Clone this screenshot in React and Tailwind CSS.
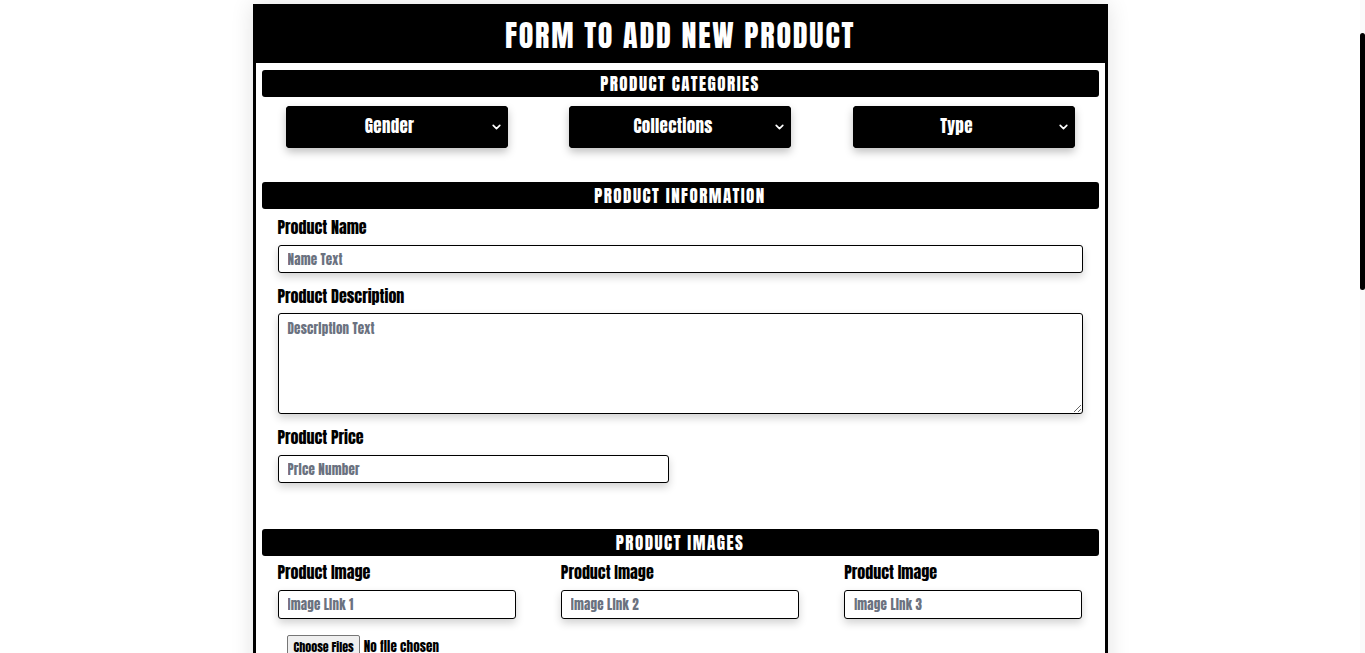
import React from "react";

const font = "font-['Anton','Roboto_Condensed','Liberation_Sans_Narrow','Arial_Narrow',sans-serif]";

function Bar({ children }) {
  return (
    <div className="h-[27px] pt-[2px] bg-black rounded-[3px] flex items-center justify-center">
      <span className="text-white text-[17px] font-normal uppercase leading-none tracking-[1.5px]">{children}</span>
    </div>
  );
}

function Chevron() {
  return (
    <svg className="absolute right-[6px] top-1/2 -translate-y-1/2 pointer-events-none" width="11" height="11" viewBox="0 0 10 10" fill="none">
      <path d="M2 3.5 L5 6.5 L8 3.5" stroke="white" strokeWidth="1.5" strokeLinecap="round" strokeLinejoin="round" />
    </svg>
  );
}

function Select({ label }) {
  return (
    <div className="relative w-[222px] h-[42px] rounded-[4px] bg-black shadow-[0_4px_8px_rgba(0,0,0,0.25)]">
      <select className="appearance-none w-full h-full bg-black text-white text-[17px] font-normal tracking-[0.3px] text-center [text-align-last:center] rounded-[4px] outline-none pl-[4px] pr-[18px]">
        <option>{label}</option>
      </select>
      <Chevron />
    </div>
  );
}

function Label({ children, className = "" }) {
  return <label className={"block text-black text-[16px] font-normal tracking-normal leading-[20px] " + className}>{children}</label>;
}

const inputCls =
  "block h-[28px] border border-black rounded-[3px] bg-white px-[9px] text-[13px] font-normal tracking-[0.2px] text-black placeholder:text-[#6b7280] shadow-[0_4px_8px_rgba(0,0,0,0.18)] outline-none";

export default function App() {
  return (
    <div className={"bg-white pr-[5px] " + font}>
      {/* page scrollbar (overlay) */}
      <div className="fixed right-0 top-0 h-screen w-[5px] bg-[#fafafa] z-10">
        <div className="mt-[33px] h-[257px] w-[5px] rounded-full bg-black" />
      </div>

      <div className="w-[855px] mx-auto mt-[4px] mb-[40px] border-[3px] border-black bg-white shadow-[0_0_22px_rgba(0,0,0,0.12)]">
        <div className="h-[56px] pt-[2px] bg-black flex items-center justify-center">
          <h1 className="text-white text-[30px] font-normal uppercase leading-none tracking-[1.8px]">Form to add new product</h1>
        </div>

        <div className="px-[6px] pt-[7px] pb-[40px]">
          <section>
            <Bar>Product Categories</Bar>
            <div className="mt-[9px] px-6 flex justify-between">
              <Select label="Gender" />
              <Select label="Collections" />
              <Select label="Type" />
            </div>
          </section>

          <section className="mt-[34px]">
            <Bar>Product Information</Bar>
            <div className="px-4">
              <Label className="mt-[8px]">Product Name</Label>
              <input className={inputCls + " w-full mt-[8px]"} placeholder="Name Text" />
              <Label className="mt-[13px]">Product Description</Label>
              <textarea className={inputCls + " w-full h-[101px] mt-[7px] pt-[5px] resize-y"} placeholder="Description Text" />
              <Label className="mt-[13px]">Product Price</Label>
              <input className={inputCls + " w-[391px] mt-[8px]"} placeholder="Price Number" />
            </div>
          </section>

          <section className="mt-[46px]">
            <Bar>Product Images</Bar>
            <div className="px-4 grid grid-cols-3 gap-x-[45px]">
              {[1, 2, 3].map((n) => (
                <div key={n}>
                  <Label className="mt-[6px]">Product Image</Label>
                  <input className={inputCls + " w-full h-[29px] mt-[8px]"} placeholder={"Image Link " + n} />
                </div>
              ))}
            </div>
            <div className="mt-[14px] pl-[25px]">
              <input type="file" multiple className="text-[13px] font-normal tracking-[0.1px] text-black file:font-normal file:tracking-normal file:text-[12px] file:pl-[6px] file:pr-[5px] file:py-[2px] file:mr-[4px] file:border file:border-[#767676] file:rounded-[2px] file:bg-[#efefef]" />
            </div>
          </section>

          <section className="mt-[46px]">
            <Bar>Product Stock</Bar>
            <div className="px-4 grid grid-cols-3 gap-x-[45px]">
              {["Size S", "Size M", "Size L", "Size XL", "Size XXL", "Color"].map((s) => (
                <div key={s}>
                  <Label className="mt-[8px]">{s}</Label>
                  <input className={inputCls + " w-full mt-[8px]"} placeholder="Quantity" />
                </div>
              ))}
            </div>
          </section>

          <div className="mt-[40px] flex justify-center">
            <button className="w-[222px] h-[42px] rounded-[4px] bg-black text-white text-[17px] font-normal uppercase tracking-[1px] shadow-[0_4px_8px_rgba(0,0,0,0.25)]">Add Product</button>
          </div>
          <div className="h-[540px]" />
        </div>
      </div>
    </div>
  );
}
